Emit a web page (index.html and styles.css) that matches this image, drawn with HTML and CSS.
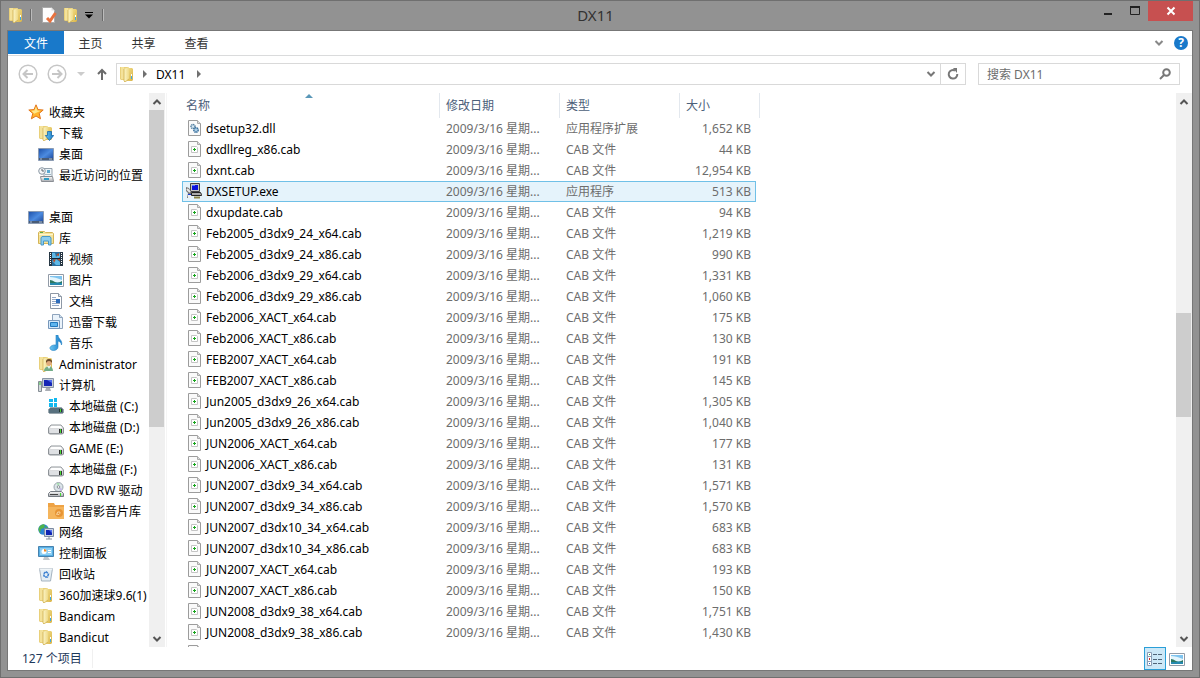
FILE: index.html
```html
<!DOCTYPE html>
<html lang="zh-CN">
<head>
  <meta charset="UTF-8">
  <meta name="viewport" content="width=device-width, initial-scale=1.0">
  <title>DX11</title>
  <link rel="stylesheet" href="styles.css">
</head>
<body>
  <!-- Icon sprite -->
  <svg class="sprite" aria-hidden="true">
    <defs>
      <linearGradient id="pale" x1="0" x2="1"><stop offset="0" stop-color="#fdf6c8"/><stop offset="1" stop-color="#eed987"/></linearGradient>
      <linearGradient id="gold" x1="0" x2="1" y2="1"><stop offset="0" stop-color="#f3e08b"/><stop offset="1" stop-color="#d9b348"/></linearGradient>
      <linearGradient id="screen" x1="0" y1="0" x2="1" y2="1"><stop offset="0" stop-color="#1c4fa8"/><stop offset=".5" stop-color="#4c8be0"/><stop offset="1" stop-color="#173f91"/></linearGradient>
      <linearGradient id="metal" x1="0" y1="0" x2="0" y2="1"><stop offset="0" stop-color="#fafafa"/><stop offset="1" stop-color="#a9acb1"/></linearGradient>
      <linearGradient id="arrow" x1="0" x2="1"><stop offset="0" stop-color="#69c6f2"/><stop offset="1" stop-color="#1678c8"/></linearGradient>
    </defs>
    <symbol id="folder" viewBox="0 0 16 16">
      <path d="M1 1h8v13H2l-1-1z" fill="#e9d07a"/>
      <path d="M2 1h3v12H2z" fill="#f4e29a"/>
      <path d="M9 2h4l1 1v11l-1 1H8z" fill="url(#gold)"/>
      <path d="M5 3l5-2v12l-4 3-1-1z" fill="url(#pale)"/>
      <path d="M5 3v12l1 1 4-3" fill="none" stroke="#cfae4e" stroke-width=".8"/>
      <path d="M12 10h1v3h-1z" fill="#3aa9e8"/><path d="M12 8h1v2h-1z" fill="#fff"/>
    </symbol>
    <symbol id="star" viewBox="0 0 16 16">
      <path d="M8 .8l2 4.8 5.2.4-4 3.400 1.300 5.400L8 12l-4.600 2.800 1.400-5.400L.8 6 6 5.600z" fill="#ffb52e" stroke="#e2751d"/>
      <path d="M8 2.500l1.300 3.900 3.400.4-6.500 3L3.300 6.800l3.200-.3z" fill="#ffe78b"/>
    </symbol>
    <symbol id="download" viewBox="0 0 16 16">
      <use href="#folder"/>
      <path d="M9.500 6.500h4v4h2.200l-4.200 5-4.200-5h2.200z" fill="url(#arrow)" stroke="#1769ad" stroke-width=".8"/>
    </symbol>
    <symbol id="desktop" viewBox="0 0 16 16">
      <path d="M.5 2.500h15v12H.5z" fill="url(#screen)" stroke="#8b9bb2"/>
      <path d="M1 12h14v2H1z" fill="#4a5c76"/><path d="M2 13h2M11 13h3" stroke="#a6bdd9"/>
    </symbol>
    <symbol id="recent" viewBox="0 0 16 16">
      <path d="M6 1.500h8v8H6z" fill="#edf4f8" stroke="#96a2ad"/>
      <path d="M9 3h3v3H9z" fill="#5ba7cf"/><path d="M7 7.500h6" stroke="#9db5c4"/>
      <path d="M2.500 9.500h12l1 5h-12z" fill="url(#metal)" stroke="#8a8e94"/>
      <path d="M6 11h5v2H6z" fill="#2e9cc4"/>
      <circle cx="4" cy="4" r="3.300" fill="#f4f6f8" stroke="#8c98a4"/><path d="M4 2v2h2" fill="none" stroke="#5c6670"/>
    </symbol>
    <symbol id="library" viewBox="0 0 16 16">
      <path d="M.5 2.500l1-1h5l1 1h7l1 1v10H.5z" fill="#f5e29a" stroke="#d4b557"/>
      <path d="M2 2.500h3" stroke="#5cab45"/><path d="M1 4.500h14" stroke="#fff6cc"/>
      <path d="M3 15V8l1-1.500h8L13 8v7h-2.500v-4h-5v4z" fill="#8ccdee" stroke="#4798c8"/>
    </symbol>
    <symbol id="video" viewBox="0 0 16 16">
      <path d="M1 1h14v14H1z" fill="#273744"/><path d="M4 1h8v14H4z" fill="#2a6f9e"/>
      <path d="M4 2h3l1 4 4-4v4l-3 2-5-1zM4 10l4-2 4 3v3H8z" fill="#5eb8e6"/>
      <path d="M8 4l3-2v3zM5 9l3-1-2 4zM9 8l3-1v3z" fill="#b64c29"/>
      <path d="M2.500 2v12M13.500 2v12" stroke="#fff" stroke-dasharray="1 1"/><path d="M4 7.500h8" stroke="#172531"/>
    </symbol>
    <symbol id="picture" viewBox="0 0 16 16">
      <path d="M.5 2.500h15v12H.5z" fill="#fff" stroke="#929ba7"/>
      <path d="M2 4h12v9H2z" fill="#7fc4ef"/><path d="M2 5q5 0 12 3v2H2z" fill="#e4f5fc"/>
      <path d="M2 8q2 0 5 2t7-1v2H2z" fill="#2d7861"/><path d="M2 11h12v2H2z" fill="#2689ae"/>
    </symbol>
    <symbol id="document" viewBox="0 0 16 16">
      <path d="M2.500.5h8l3 3v12h-11z" fill="#fff" stroke="#8e98a5"/><path d="M10.500.5v3h3" fill="#dce5ed" stroke="#8e98a5"/>
      <path d="M4 4.500h4M4 6.500h4M4 8.500h4M4 10.500h8M4 12.500h7" stroke="#95a9c6"/><path d="M8 6h4v4H8z" fill="#2e6dbb"/>
    </symbol>
    <symbol id="thunder" viewBox="0 0 16 16">
      <path d="M4.500.5h7l3 3v11h-10z" fill="#eaf3fb" stroke="#8fa4bd"/><path d="M11.500.5v3h3" fill="#cfdfed" stroke="#8fa4bd"/>
      <path d="M.5 6.500h11v8H.5z" fill="#d6e9fa" stroke="#7797ba"/><path d="M2.500 8.500h7v4h-7z" fill="#5eb5ef" stroke="#2378bd"/>
    </symbol>
    <symbol id="music" viewBox="0 0 16 16">
      <path d="M8 0h2c0 4 5 5 3.500 10C13 7 11.500 6.500 10 6v6c0 2-2 3.500-4.500 3.500S1.500 14 2 12.500s3-3 6-2.500z" fill="url(#arrow)" stroke="#2383c4" stroke-width=".6"/>
    </symbol>
    <symbol id="user" viewBox="0 0 16 16">
      <use href="#folder"/>
      <path d="M6 15q0-4 5-5 4 1 4 5z" fill="#72ad88"/><path d="M9 10l2 3 2-3z" fill="#e3f2eb"/>
      <circle cx="11" cy="7" r="2.800" fill="#e0aa7c"/><path d="M8 7q-.5-4 3-4t3 4q-1-2-3-2t-3 2z" fill="#6a4829"/>
    </symbol>
    <symbol id="computer" viewBox="0 0 16 16">
      <path d="M.5 4.500h3v10h-3z" fill="#d5dadd" stroke="#858d94"/><path d="M2 5v3" stroke="#36c23b"/>
      <path d="M4.500 1.500h11v9h-11z" fill="#c6ced8" stroke="#8995a5"/><path d="M6 3h8v6H6z" fill="#1526b5"/><path d="M9 3h5v3z" fill="#516bed"/>
      <path d="M8 11h4l1 3H7z" fill="#a9adb4"/>
    </symbol>
    <symbol id="drive" viewBox="0 0 16 16">
      <path d="M3 6h10l2.500 3v5l-1 1h-13l-1-1V9z" fill="url(#metal)" stroke="#777d84" stroke-width=".8"/>
      <path d="M3.500 7h9l1.500 2H2z" fill="#fff"/><path d="M1.500 10h13v4h-13z" fill="#dfe1e4"/>
      <path d="M11 10h3v4h-3z" fill="#333"/><path d="M12.500 10v4" stroke="#45d933"/>
    </symbol>
    <symbol id="sysdrive" viewBox="0 0 16 16">
      <path d="M2.500 9.500h11l2 2v3l-1 1h-13l-1-1v-3z" fill="#58717f" stroke="#9aa6ad"/><path d="M11 11h3v3h-3z" fill="#263832"/><path d="M12.500 11v3" stroke="#45d933"/>
      <path d="M1 1h4v3H1zM6 0h3v4H6zM1 5h4v4H1zM6 5h3v4H6z" fill="#12b8ef"/>
    </symbol>
    <symbol id="dvd" viewBox="0 0 16 16">
      <circle cx="10.500" cy="5" r="4.500" fill="#dce5e9" stroke="#9ca6ae"/><path d="M10.500 5l-2-4h3z" fill="#a9deb2"/><path d="M10.500 5l4 2-2 2z" fill="#c5bae9"/><circle cx="10.500" cy="5" r="1.300" fill="#fff" stroke="#8b9298"/>
      <path d="M2.500 9.500h11l2 2v3H.5v-3z" fill="url(#metal)" stroke="#777d84"/><path d="M2 12.500h8" stroke="#444"/><path d="M12.500 11v3" stroke="#45d933"/>
    </symbol>
    <symbol id="filmbox" viewBox="0 0 16 16">
      <path d="M0 0h6l1 2h9v14H0z" fill="#eea345"/><path d="M0 4h16v12H0z" fill="#f5b55c"/>
      <circle cx="11" cy="10" r="4" fill="#e79434"/><path d="M8 11q4 2 4-2-3-1-3 2" fill="none" stroke="#f8d29b"/>
    </symbol>
    <symbol id="network" viewBox="0 0 16 16">
      <circle cx="5.500" cy="5.500" r="5.200" fill="#2b85d3"/><path d="M2 2q3-3 5-1l-1 3-3 1-1 4Q-1 5 2 2zM8 2l3 3-3 3-2-2z" fill="#4fb34a"/>
      <path d="M6.500 4.500h9v8h-9z" fill="#cbd4e1" stroke="#7c8ba3"/><path d="M8 6h6v5H8z" fill="#1026b3"/><path d="M11 6h3v3z" fill="#5271ee"/><path d="M11 13v2M8 15h6" stroke="#838e9c"/>
    </symbol>
    <symbol id="control" viewBox="0 0 16 16">
      <path d="M.5 1.500h15v10H.5z" fill="#58b0e5" stroke="#4782ae"/><path d="M2 3h12v7H2z" fill="#8ed0f5"/>
      <circle cx="6" cy="6.500" r="2.500" fill="#fff"/><path d="M6 6.500V4a2.500 2.500 0 0 1 2.500 2.500z" fill="#f18a25"/><path d="M10 5.500h3M10 7.500h3" stroke="#fff"/>
      <path d="M6 12h4l2 3H5z" fill="#c3c8cc"/>
    </symbol>
    <symbol id="bin" viewBox="0 0 16 16">
      <path d="M1.500 2.500h13l-2 12.500h-9z" fill="#e4eef4" stroke="#a5b3bf"/><path d="M1.500 2.500h13v1h-13z" fill="#fff"/>
      <path d="M8 5.500L10.500 8 9.500 11h-3L5.500 8z" fill="none" stroke="#387ed0" stroke-width="1.500" stroke-dasharray="2.500 .8"/>
    </symbol>
    <symbol id="cab" viewBox="0 0 16 16">
      <path d="M2.500.5h9l3 3v12h-12z" fill="#fafafa" stroke="#9c9c9c"/><path d="M11.500.5v3h3" fill="#ddd" stroke="#aaa"/>
      <path d="M5.500 5.500h5l1 1v5h-6z" fill="#fff" stroke="#c4c4c4"/><path d="M7 8.500h3M8.500 7v3" stroke="#18a51d"/>
    </symbol>
    <symbol id="dll" viewBox="0 0 16 16">
      <path d="M2.500.5h9l3 3v12h-12z" fill="#fafafa" stroke="#9c9c9c"/><path d="M11.500.5v3h3" fill="#ddd" stroke="#aaa"/>
      <circle cx="7" cy="6.500" r="2" fill="#d7e9f5" stroke="#557f9f" stroke-width="1.500" stroke-dasharray="1.200 .5"/><circle cx="10" cy="10" r="2.200" fill="#a9cde7" stroke="#396f9b" stroke-width="1.500" stroke-dasharray="1.200 .5"/>
    </symbol>
    <symbol id="setup" viewBox="0 0 16 16">
      <path d="M4.500.5h9v8h-9z" fill="#c4c4c4" stroke="#444"/><path d="M6 2h6v5H6z" fill="#0c12dc"/><path d="M6 2h3v1H6z" fill="#5a78ff"/>
      <path d="M5.500 9.500h9l1 2v1h-10z" fill="#aaa" stroke="#222"/><path d="M8 14.500h6" stroke="#8b8547" stroke-width="2"/>
      <path d="M0 4l3 1 2 4v6H1l1-5-2-2z" fill="#777"/><path d="M1 6l3 3" stroke="#e8e8e8" stroke-width="2"/><path d="M2 11h3v4H2z" fill="#eee"/><path d="M2 11.500h3" stroke="#1438d4"/>
    </symbol>
    <symbol id="chev-up" viewBox="0 0 10 10"><path d="M1.500 7L5 3.500 8.500 7" fill="none" stroke="#555" stroke-width="2"/></symbol>
    <symbol id="chev-down" viewBox="0 0 10 10"><path d="M1.500 3L5 6.500 8.500 3" fill="none" stroke="currentColor" stroke-width="2"/></symbol>
  </svg>

  <div class="window">
    <!-- Title bar -->
    <header class="titlebar">
      <div class="quick">
        <svg class="icon"><use href="#folder"/></svg>
        <span class="divider"></span>
        <button type="button" aria-label="属性"><svg class="icon" viewBox="0 0 16 16"><path d="M1.500.5h9l3 3v12h-12z" fill="#fdfdfd" stroke="#aaa"/><path d="M10.500.5v3h3z" fill="#ddd"/><path d="M6 11l3 3 5.500-8" fill="none" stroke="#e8713e" stroke-width="3"/></svg></button>
        <button type="button" aria-label="新建文件夹"><svg class="icon"><use href="#folder"/></svg></button>
        <button type="button" class="customize" aria-label="自定义"><svg viewBox="0 0 8 8"><path d="M0 1.500h8" stroke="#000"/><path d="M0 3.500h8L4 7.500z" fill="#000"/></svg></button>
        <span class="divider"></span>
      </div>
      <h1>DX11</h1>
      <div class="caption">
        <button type="button" aria-label="最小化"><svg viewBox="0 0 10 10"><path d="M1 8h8" stroke="#222" stroke-width="2"/></svg></button>
        <button type="button" aria-label="最大化"><svg viewBox="0 0 10 10"><path d="M0 1h10" stroke="#222" stroke-width="2"/><path d="M.5 1v7.500h9V1" fill="none" stroke="#222"/></svg></button>
        <button type="button" class="close" aria-label="关闭"><svg viewBox="0 0 10 10"><path d="M1.500 1.500l7 7M8.500 1.500l-7 7" stroke="#fff" stroke-width="2"/></svg></button>
      </div>
    </header>

    <div class="client">
      <!-- Ribbon tabs -->
      <nav class="ribbon">
        <button type="button" class="file-tab">文件</button>
        <button type="button">主页</button>
        <button type="button">共享</button>
        <button type="button">查看</button>
        <div class="ribbon-tools">
          <button type="button" aria-label="展开功能区"><svg class="small"><use href="#chev-down"/></svg></button>
          <button type="button" class="help" aria-label="帮助">?</button>
        </div>
      </nav>

      <!-- Address row -->
      <div class="navbar">
        <div class="history">
          <button type="button" aria-label="后退"><svg viewBox="0 0 20 20"><circle cx="10" cy="10" r="8.800" fill="none" stroke="#c6c6c6" stroke-width="1.500"/><path d="M15 10H6M9.500 6L5.500 10l4 4" fill="none" stroke="#c6c6c6" stroke-width="2"/></svg></button>
          <button type="button" aria-label="前进"><svg viewBox="0 0 20 20"><circle cx="10" cy="10" r="8.800" fill="none" stroke="#c6c6c6" stroke-width="1.500"/><path d="M5 10h9M10.500 6l4 4-4 4" fill="none" stroke="#c6c6c6" stroke-width="2"/></svg></button>
          <button type="button" class="narrow" aria-label="最近位置"><svg viewBox="0 0 8 8"><path d="M0 2h8L4 6z" fill="#ccc"/></svg></button>
          <button type="button" class="up" aria-label="上移"><svg viewBox="0 0 10 12"><path d="M5 12V2M1 6l4-4 4 4" fill="none" stroke="#6b6b6b" stroke-width="2"/></svg></button>
        </div>
        <div class="address">
          <svg class="icon"><use href="#folder"/></svg>
          <svg class="crumb-arrow" viewBox="0 0 4 8"><path d="M0 0l4 4-4 4z" fill="#707070"/></svg>
          <a href="#">DX11</a>
          <svg class="crumb-arrow" viewBox="0 0 4 8"><path d="M0 0l4 4-4 4z" fill="#707070"/></svg>
          <button type="button" class="drop" aria-label="历史记录"><svg class="small"><use href="#chev-down"/></svg></button>
          <button type="button" class="refresh" aria-label="刷新"><svg viewBox="0 0 12 12"><path d="M8 2.500A4.300 4.300 0 1 0 10.300 6" fill="none" stroke="#777" stroke-width="2"/><path d="M6 0h4v5z" fill="#777"/></svg></button>
        </div>
        <div class="search">
          <input type="text" placeholder="搜索 DX11" aria-label="搜索 DX11">
          <svg viewBox="0 0 12 12"><circle cx="7.500" cy="4.500" r="3.300" fill="none" stroke="#777" stroke-width="2"/><path d="M5 7l-4 4" stroke="#777" stroke-width="2"/></svg>
        </div>
      </div>

      <div class="content">
        <!-- Navigation tree -->
        <nav class="tree">
          <ul>
            <li><a href="#"><svg class="icon"><use href="#star"/></svg>收藏夹</a></li>
            <li class="level-2"><a href="#"><svg class="icon"><use href="#download"/></svg>下载</a></li>
            <li class="level-2"><a href="#"><svg class="icon"><use href="#desktop"/></svg>桌面</a></li>
            <li class="level-2"><a href="#"><svg class="icon"><use href="#recent"/></svg>最近访问的位置</a></li>
          </ul>
          <ul>
            <li><a href="#"><svg class="icon"><use href="#desktop"/></svg>桌面</a></li>
            <li class="level-2"><a href="#"><svg class="icon"><use href="#library"/></svg>库</a></li>
            <li class="level-3"><a href="#"><svg class="icon"><use href="#video"/></svg>视频</a></li>
            <li class="level-3"><a href="#"><svg class="icon"><use href="#picture"/></svg>图片</a></li>
            <li class="level-3"><a href="#"><svg class="icon"><use href="#document"/></svg>文档</a></li>
            <li class="level-3"><a href="#"><svg class="icon"><use href="#thunder"/></svg>迅雷下载</a></li>
            <li class="level-3"><a href="#"><svg class="icon"><use href="#music"/></svg>音乐</a></li>
            <li class="level-2"><a href="#"><svg class="icon"><use href="#user"/></svg>Administrator</a></li>
            <li class="level-2"><a href="#"><svg class="icon"><use href="#computer"/></svg>计算机</a></li>
            <li class="level-3"><a href="#"><svg class="icon"><use href="#sysdrive"/></svg>本地磁盘 (C:)</a></li>
            <li class="level-3"><a href="#"><svg class="icon"><use href="#drive"/></svg>本地磁盘 (D:)</a></li>
            <li class="level-3"><a href="#"><svg class="icon"><use href="#drive"/></svg>GAME (E:)</a></li>
            <li class="level-3"><a href="#"><svg class="icon"><use href="#drive"/></svg>本地磁盘 (F:)</a></li>
            <li class="level-3"><a href="#"><svg class="icon"><use href="#dvd"/></svg>DVD RW 驱动</a></li>
            <li class="level-3"><a href="#"><svg class="icon"><use href="#filmbox"/></svg>迅雷影音片库</a></li>
            <li class="level-2"><a href="#"><svg class="icon"><use href="#network"/></svg>网络</a></li>
            <li class="level-2"><a href="#"><svg class="icon"><use href="#control"/></svg>控制面板</a></li>
            <li class="level-2"><a href="#"><svg class="icon"><use href="#bin"/></svg>回收站</a></li>
            <li class="level-2"><a href="#"><svg class="icon"><use href="#folder"/></svg>360加速球9.6(1)</a></li>
            <li class="level-2"><a href="#"><svg class="icon"><use href="#folder"/></svg>Bandicam</a></li>
            <li class="level-2"><a href="#"><svg class="icon"><use href="#folder"/></svg>Bandicut</a></li>
          </ul>
        </nav>
        <div class="scrollbar">
          <button type="button" aria-label="向上滚动"><svg class="small"><use href="#chev-up"/></svg></button>
          <div class="track"><div class="thumb thumb-tree"></div></div>
          <button type="button" aria-label="向下滚动"><svg class="small"><use href="#chev-down"/></svg></button>
        </div>

        <!-- File list -->
        <main class="files">
          <table>
            <colgroup><col class="col-name"><col class="col-date"><col class="col-type"><col class="col-size"><col class="col-end"></colgroup>
            <thead>
              <tr><th class="sorted">名称</th><th>修改日期</th><th>类型</th><th class="no-line">大小</th><th></th></tr>
            </thead>
            <tbody>
              <tr><td><svg class="icon"><use href="#dll"/></svg>dsetup32.dll</td><td>2009/3/16 星期...</td><td>应用程序扩展</td><td>1,652 KB</td></tr>
              <tr><td><svg class="icon"><use href="#cab"/></svg>dxdllreg_x86.cab</td><td>2009/3/16 星期...</td><td>CAB 文件</td><td>44 KB</td></tr>
              <tr><td><svg class="icon"><use href="#cab"/></svg>dxnt.cab</td><td>2009/3/16 星期...</td><td>CAB 文件</td><td>12,954 KB</td></tr>
              <tr class="selected"><td><svg class="icon"><use href="#setup"/></svg>DXSETUP.exe</td><td>2009/3/16 星期...</td><td>应用程序</td><td>513 KB</td></tr>
              <tr><td><svg class="icon"><use href="#cab"/></svg>dxupdate.cab</td><td>2009/3/16 星期...</td><td>CAB 文件</td><td>94 KB</td></tr>
              <tr><td><svg class="icon"><use href="#cab"/></svg>Feb2005_d3dx9_24_x64.cab</td><td>2009/3/16 星期...</td><td>CAB 文件</td><td>1,219 KB</td></tr>
              <tr><td><svg class="icon"><use href="#cab"/></svg>Feb2005_d3dx9_24_x86.cab</td><td>2009/3/16 星期...</td><td>CAB 文件</td><td>990 KB</td></tr>
              <tr><td><svg class="icon"><use href="#cab"/></svg>Feb2006_d3dx9_29_x64.cab</td><td>2009/3/16 星期...</td><td>CAB 文件</td><td>1,331 KB</td></tr>
              <tr><td><svg class="icon"><use href="#cab"/></svg>Feb2006_d3dx9_29_x86.cab</td><td>2009/3/16 星期...</td><td>CAB 文件</td><td>1,060 KB</td></tr>
              <tr><td><svg class="icon"><use href="#cab"/></svg>Feb2006_XACT_x64.cab</td><td>2009/3/16 星期...</td><td>CAB 文件</td><td>175 KB</td></tr>
              <tr><td><svg class="icon"><use href="#cab"/></svg>Feb2006_XACT_x86.cab</td><td>2009/3/16 星期...</td><td>CAB 文件</td><td>130 KB</td></tr>
              <tr><td><svg class="icon"><use href="#cab"/></svg>FEB2007_XACT_x64.cab</td><td>2009/3/16 星期...</td><td>CAB 文件</td><td>191 KB</td></tr>
              <tr><td><svg class="icon"><use href="#cab"/></svg>FEB2007_XACT_x86.cab</td><td>2009/3/16 星期...</td><td>CAB 文件</td><td>145 KB</td></tr>
              <tr><td><svg class="icon"><use href="#cab"/></svg>Jun2005_d3dx9_26_x64.cab</td><td>2009/3/16 星期...</td><td>CAB 文件</td><td>1,305 KB</td></tr>
              <tr><td><svg class="icon"><use href="#cab"/></svg>Jun2005_d3dx9_26_x86.cab</td><td>2009/3/16 星期...</td><td>CAB 文件</td><td>1,040 KB</td></tr>
              <tr><td><svg class="icon"><use href="#cab"/></svg>JUN2006_XACT_x64.cab</td><td>2009/3/16 星期...</td><td>CAB 文件</td><td>177 KB</td></tr>
              <tr><td><svg class="icon"><use href="#cab"/></svg>JUN2006_XACT_x86.cab</td><td>2009/3/16 星期...</td><td>CAB 文件</td><td>131 KB</td></tr>
              <tr><td><svg class="icon"><use href="#cab"/></svg>JUN2007_d3dx9_34_x64.cab</td><td>2009/3/16 星期...</td><td>CAB 文件</td><td>1,571 KB</td></tr>
              <tr><td><svg class="icon"><use href="#cab"/></svg>JUN2007_d3dx9_34_x86.cab</td><td>2009/3/16 星期...</td><td>CAB 文件</td><td>1,570 KB</td></tr>
              <tr><td><svg class="icon"><use href="#cab"/></svg>JUN2007_d3dx10_34_x64.cab</td><td>2009/3/16 星期...</td><td>CAB 文件</td><td>683 KB</td></tr>
              <tr><td><svg class="icon"><use href="#cab"/></svg>JUN2007_d3dx10_34_x86.cab</td><td>2009/3/16 星期...</td><td>CAB 文件</td><td>683 KB</td></tr>
              <tr><td><svg class="icon"><use href="#cab"/></svg>JUN2007_XACT_x64.cab</td><td>2009/3/16 星期...</td><td>CAB 文件</td><td>193 KB</td></tr>
              <tr><td><svg class="icon"><use href="#cab"/></svg>JUN2007_XACT_x86.cab</td><td>2009/3/16 星期...</td><td>CAB 文件</td><td>150 KB</td></tr>
              <tr><td><svg class="icon"><use href="#cab"/></svg>JUN2008_d3dx9_38_x64.cab</td><td>2009/3/16 星期...</td><td>CAB 文件</td><td>1,751 KB</td></tr>
              <tr><td><svg class="icon"><use href="#cab"/></svg>JUN2008_d3dx9_38_x86.cab</td><td>2009/3/16 星期...</td><td>CAB 文件</td><td>1,430 KB</td></tr>
              <tr><td><svg class="icon"><use href="#cab"/></svg></td><td></td><td></td><td></td></tr>
            </tbody>
          </table>
        </main>
        <div class="scrollbar">
          <button type="button" aria-label="向上滚动"><svg class="small"><use href="#chev-up"/></svg></button>
          <div class="track"><div class="thumb thumb-files"></div></div>
          <button type="button" aria-label="向下滚动"><svg class="small"><use href="#chev-down"/></svg></button>
        </div>
      </div>

      <!-- Status bar -->
      <footer class="status">
        <span class="count">127 个项目</span>
        <div class="views">
          <button type="button" class="active" aria-label="详细信息"><svg class="icon" viewBox="0 0 16 16"><path d="M.5 1.500h4v13h-4zM.5 5.500h4M.5 10.500h4" fill="#fff" stroke="#8b9db5"/><path d="M2 3.500h1" stroke="#2b9e42"/><path d="M2 8h1" stroke="#d22" stroke-width="2"/><path d="M2 12.500h1" stroke="#2468c8"/><path d="M6 3.500h4M11 3.500h4M6 8.500h4M11 8.500h4M6 12.500h4M11 12.500h4" stroke="#4f6478"/></svg></button>
          <button type="button" aria-label="缩略图"><svg class="icon"><use href="#picture"/></svg></button>
        </div>
      </footer>
    </div>
  </div>
</body>
</html>
```
FILE: styles.css
```css
* {
  box-sizing: border-box;
}

body {
  margin: 0;
  font-family: "Noto Sans", "Noto Sans CJK SC", sans-serif;
  font-size: 12px;
  color: #000;
}

button {
  display: flex;
  align-items: center;
  justify-content: center;
  margin: 0;
  padding: 0;
  border: none;
  background: none;
  font: inherit;
  color: inherit;
}

a {
  color: inherit;
  text-decoration: none;
}

svg {
  display: block;
  flex: none;
}

.sprite {
  position: absolute;
  width: 0;
  height: 0;
}

.icon {
  width: 16px;
  height: 16px;
}

.small {
  width: 10px;
  height: 10px;
}

.window {
  display: flex;
  flex-direction: column;
  height: 100vh;
  padding: 0 6px 6px;
  border: 1px solid #6f6f6f;
  background-color: #929292;
}

/* Title bar */
.titlebar {
  display: grid;
  grid-template-columns: 1fr auto 1fr;
  height: 29px;
}

.quick {
  display: flex;
  align-items: center;
  gap: 6px;
  padding: 0 0 1px 1px;
}

.divider {
  width: 2px;
  height: 12px;
  margin-right: 3px;
  border-left: 1px solid #6a6a6a;
  border-right: 1px solid #bbb;
}

.customize {
  margin-right: 3px;
}

.customize svg {
  width: 8px;
  height: 8px;
}

h1 {
  margin: 0;
  padding-right: 9px;
  font-size: 15px;
  font-weight: normal;
  line-height: 28px;
  color: #333;
}

.caption {
  display: flex;
  justify-content: flex-end;
}

.caption button {
  width: 27px;
  height: 20px;
}

.caption svg {
  width: 10px;
  height: 10px;
}

.caption .close {
  width: 45px;
  background-color: #c75050;
}

.client {
  display: flex;
  flex: 1;
  flex-direction: column;
  min-height: 0;
  border: 1px solid #777;
  background-color: #fff;
}

/* Ribbon */
.ribbon {
  display: flex;
  height: 25px;
  padding-bottom: 1px;
  border-bottom: 1px solid #dadbdc;
  color: #333;
}

.ribbon > button {
  width: 53px;
}

.ribbon > .file-tab {
  width: 56px;
  background-color: #1979ca;
  color: #fff;
}

.ribbon-tools {
  display: flex;
  align-items: center;
  gap: 10px;
  margin-left: auto;
  padding-right: 4px;
  color: #888;
}

.help {
  width: 14px;
  height: 14px;
  border-radius: 50%;
  background-color: #1979ca;
  font-weight: bold;
  line-height: 14px;
  color: #fff;
}

/* Address row */
.navbar {
  display: flex;
  align-items: center;
  height: 37px;
  padding: 0 12px 1px 10px;
}

.history {
  display: flex;
  align-items: center;
  gap: 9px;
  width: 98px;
}

.history svg {
  width: 20px;
  height: 20px;
}

.history .narrow svg {
  width: 8px;
  height: 8px;
  margin: 0 3px 0 1px;
}

.history .up svg {
  width: 10px;
  height: 12px;
}

.address {
  display: flex;
  flex: 1;
  align-items: center;
  height: 22px;
  border: 1px solid #d9d9d9;
}

.address .icon {
  margin-left: 2px;
}

.address a {
  margin: 0 12px 0 9px;
}

.crumb-arrow {
  width: 4px;
  height: 8px;
}

.address .icon + .crumb-arrow {
  margin-left: 8px;
}

.drop {
  width: 19px;
  height: 20px;
  margin-left: auto;
  color: #777;
}

.refresh {
  width: 25px;
  height: 20px;
  border-left: 1px solid #d9d9d9;
}

.refresh svg,
.search svg {
  width: 12px;
  height: 12px;
}

.search {
  display: flex;
  align-items: center;
  width: 202px;
  height: 22px;
  margin-left: 12px;
  padding: 0 8px;
  border: 1px solid #d9d9d9;
}

.search input {
  flex: 1;
  min-width: 0;
  padding: 0;
  border: none;
  outline: none;
  font: inherit;
}

.search input::placeholder {
  color: #6d6d6d;
}

.content {
  display: flex;
  flex: 1;
  min-height: 0;
}

/* Navigation tree */
.tree {
  width: 141px;
  padding-top: 9px;
  overflow: hidden;
}

.tree ul {
  margin: 0 0 21px;
  padding: 0 0 0 20px;
  list-style: none;
}

.tree a {
  display: flex;
  align-items: center;
  gap: 5px;
  height: 21px;
  padding-bottom: 1px;
  white-space: nowrap;
}

.level-2 {
  padding-left: 10px;
}

.level-3 {
  padding-left: 20px;
}

/* Scrollbars */
.scrollbar {
  display: flex;
  flex: none;
  flex-direction: column;
  width: 16px;
  background-color: #f0f0f0;
  color: #555;
}

.scrollbar button {
  height: 17px;
}

.track {
  flex: 1;
}

.thumb {
  width: 15px;
  background-color: #cdcdcd;
}

.thumb-tree {
  height: 61%;
}

.thumb-files {
  height: 20%;
}

.track:has(.thumb-files) {
  display: flex;
  flex-direction: column;
}

.track:has(.thumb-files)::before {
  content: "";
  height: 39%;
}

/* File list */
.files {
  flex: 1;
  margin-left: 1px;
  padding-left: 15px;
  border-left: 1px solid #f5f5f5;
  overflow: hidden;
}

table {
  width: 578px;
  table-layout: fixed;
  border-collapse: separate;
  border-spacing: 0;
}

.col-name {
  width: 258px;
}

.col-date,
.col-type {
  width: 120px;
}

.col-size {
  width: 76px;
}

.col-end {
  width: 4px;
}

th {
  position: relative;
  height: 25px;
  padding: 0 0 2px 6px;
  border-right: 1px solid #e3e8ee;
  font-weight: normal;
  text-align: left;
  color: #4c607a;
}

th:first-child {
  padding-left: 4px;
}

th:last-child {
  padding: 0;
}

.no-line {
  border-right: none;
}

.sorted::after {
  content: "";
  position: absolute;
  top: 1px;
  left: calc(50% - 6px);
  border: 4px solid transparent;
  border-top: none;
  border-bottom-color: #5a97b8;
}

td {
  height: 21px;
  padding: 0 0 0 6px;
  line-height: 21px;
  vertical-align: top;
  white-space: nowrap;
  color: #6d6d6d;
}

td:first-child {
  padding-left: 4px;
  color: #000;
}

td .icon {
  display: inline-block;
  margin: 2px 4px 0 0;
  vertical-align: top;
}

td:nth-child(4) {
  padding: 0 5px 0 0;
  text-align: right;
}

.selected td {
  background-color: #e5f3fb;
  box-shadow: inset 0 1px #70c0e7, inset 0 -1px #70c0e7;
}

.selected td:first-child {
  box-shadow: inset 1px 1px #70c0e7, inset 0 -1px #70c0e7;
}

.selected td:last-child {
  box-shadow: inset -1px 1px #70c0e7, inset 0 -1px #70c0e7;
}

/* Status bar */
.status {
  display: flex;
  align-items: center;
  justify-content: space-between;
  height: 23px;
  padding: 0 4px 0 14px;
}

.count {
  padding: 0 10px 1px 0;
  border-right: 1px solid #f0f0f0;
  color: #1e395b;
}

.views {
  display: flex;
}

.views button {
  width: 22px;
  height: 23px;
}

.views .active {
  border: 1px solid #2a9fd8;
  background-color: #cce8f7;
}
```
